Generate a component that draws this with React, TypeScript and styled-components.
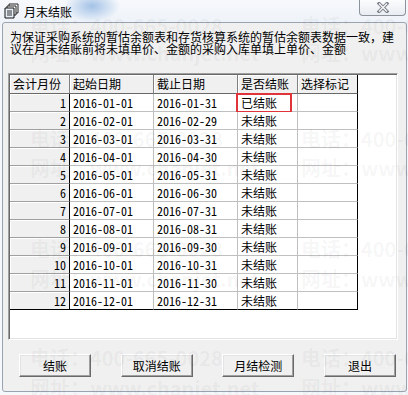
import styled, { createGlobalStyle } from "styled-components";

const rows = Array.from({ length: 12 }, (_, i) => {
  const m = i + 1;
  const mm = String(m).padStart(2, "0");
  const last = new Date(2016, m, 0).getDate();
  return {
    month: m,
    start: `2016-${mm}-01`,
    end: `2016-${mm}-${last}`,
    status: m === 1 ? "已结账" : "未结账",
  };
});

const marks = [
  { x: 30, y: 15, t: "电话：400-665-0028" },
  { x: 301, y: 15, t: "电话：400-665-0028" },
  { x: 30, y: 42, t: "网址：www.chanjet.net" },
  { x: 301, y: 42, t: "网址：www.chanjet.net" },
  { x: 30, y: 128, t: "电话：400-665-0028" },
  { x: 301, y: 128, t: "电话：400-665-0028" },
  { x: 30, y: 157, t: "网址：www.chanjet.net" },
  { x: 301, y: 157, t: "网址：www.chanjet.net" },
  { x: 30, y: 238, t: "电话：400-665-0028" },
  { x: 301, y: 238, t: "电话：400-665-0028" },
  { x: 30, y: 268, t: "网址：www.chanjet.net" },
  { x: 301, y: 268, t: "网址：www.chanjet.net" },
  { x: 30, y: 347, t: "电话：400-665-0028" },
  { x: 301, y: 347, t: "电话：400-665-0028" },
  { x: 30, y: 377, t: "网址：www.chanjet.net" },
  { x: 301, y: 377, t: "网址：www.chanjet.net" },
];

const App = () => {
  return (
    <>
      <GlobalStyle />
      <Window>
        <TitleBar>
          <svg width="17" height="16" viewBox="0 0 17 16">
            <path d="M6 1h9v9H6z" fill="#fff" stroke="#222" />
            <path d="M4 3h9v9H4z" fill="#fff" stroke="#222" />
            <path d="M2 5h9v10H2z" fill="#e8eef6" stroke="#111" />
            <path d="M4 8h5M4 10h5M4 12h5" stroke="#333" />
          </svg>
          <Title>月末结账</Title>
          <CloseBtn>
            <svg width="14" height="11" viewBox="0 0 14 11">
              <path
                d="M3 1.5l8 8M11 1.5l-8 8"
                stroke="#7a808a"
                strokeWidth="3.2"
                strokeLinecap="square"
                fill="none"
              />
              <path
                d="M3 1.5l8 8M11 1.5l-8 8"
                stroke="#f6f7f9"
                strokeWidth="1.4"
                fill="none"
              />
            </svg>
          </CloseBtn>
        </TitleBar>
        <Client>
          <Message>
            <Line>为保证采购系统的暂估余额表和存货核算系统的暂估余额表数据一致，建</Line>
            <Line>议在月末结账前将未填单价、金额的采购入库单填上单价、金额</Line>
          </Message>
          <GridBox>
            <Grid>
              <Cell $kind="head">会计月份</Cell>
              <Cell $kind="head">起始日期</Cell>
              <Cell $kind="head">截止日期</Cell>
              <Cell $kind="head">是否结账</Cell>
              <Cell $kind="head" $lastCol>
                选择标记
              </Cell>
              {rows.map((r, i) => {
                const lastRow = i === rows.length - 1;
                return [
                  <Cell key={`m${i}`} $kind="rowhead" $lastRow={lastRow}>
                    {r.month}
                  </Cell>,
                  <Cell key={`s${i}`} $kind="data" $lastRow={lastRow}>
                    {r.start}
                  </Cell>,
                  <Cell key={`e${i}`} $kind="data" $lastRow={lastRow}>
                    {r.end}
                  </Cell>,
                  <Cell key={`t${i}`} $kind="data" $lastRow={lastRow}>
                    {r.status}
                    {i === 0 && <Highlight />}
                  </Cell>,
                  <Cell key={`x${i}`} $kind="data" $lastRow={lastRow} $lastCol />,
                ];
              })}
            </Grid>
          </GridBox>
          <BtnRow>
            <Btn>结账</Btn>
            <Btn>取消结账</Btn>
            <Btn>月结检测</Btn>
            <Btn>退出</Btn>
          </BtnRow>
        </Client>
        {marks.map((m, i) => (
          <Watermark key={i} $x={m.x} $y={m.y}>
            {m.t}
          </Watermark>
        ))}
      </Window>
    </>
  );
};

export default App;

const GlobalStyle = createGlobalStyle`
  body {
    margin: 0;
    background: #f5f8fb;
    font-family: "Noto Sans Mono CJK SC", "Noto Sans CJK SC", monospace;
    font-size: 12px;
    color: #000;
  }
`;

const Window = styled.div`
  position: relative;
  width: 408px;
  height: 395px;
  overflow: hidden;
  background:
    radial-gradient(ellipse 28px 16px at 92px 6px, rgba(96, 150, 214, 0.55), transparent),
    linear-gradient(#f7f9fc, #eef3f9 22px, #f5f8fb 30px);
`;

const TitleBar = styled.div`
  display: flex;
  align-items: center;
  height: 22px;
  padding-left: 3px;
`;

const Title = styled.div`
  margin-left: 4px;
  margin-top: 2px;
  font-family: "Noto Sans CJK SC", sans-serif;
  font-size: 12px;
  line-height: 12px;
`;

const CloseBtn = styled.div`
  display: flex;
  align-items: center;
  justify-content: center;
  align-self: flex-start;

  width: 45px;
  height: 15px;
  margin-left: auto;
  margin-right: 2px;

  border: 1px solid #8d939c;
  border-top: none;
  border-radius: 0 0 4px 4px;
  background: linear-gradient(#fbfcfd, #e9edf2);
`;

const Client = styled.div`
  display: flex;
  flex-direction: column;

  height: 370px;
  margin: 0 1px 0 2px;

  background: #f0f0f0;
  border: 1px solid #9aa4b0;
  border-radius: 3px;
  box-sizing: border-box;
`;

const Message = styled.div`
  padding: 8px 0 0 7px;
`;

const Line = styled.div`
  height: 12px;
  line-height: 12px;
  white-space: nowrap;
  font-family: "Noto Sans CJK SC", sans-serif;
`;

const GridBox = styled.div`
  width: 390px;
  height: 267px;
  margin: 18px 0 0 5px;

  background: #fff;
  border-top: 1px solid #a0a0a0;
  border-left: 1px solid #a0a0a0;
  border-right: 1px solid #fff;
  border-bottom: 1px solid #fff;
  box-shadow: inset 1px 1px 0 #696969, inset -1px -1px 0 #e3e3e3;
  box-sizing: border-box;
  padding: 1px;
`;

const Grid = styled.div`
  display: grid;
  grid-template-columns: 60px 84px 84px 60px 60px;
  grid-template-rows: 19px repeat(12, 18px);
  width: 348px;
`;

const Cell = styled.div<{
  $kind: "head" | "rowhead" | "data";
  $lastCol?: boolean;
  $lastRow?: boolean;
}>`
  position: relative;
  box-sizing: border-box;
  padding: 0 3px;
  line-height: 18px;
  white-space: nowrap;

  background: ${(p) => (p.$kind === "data" ? "#fff" : "#f0f0f0")};
  text-align: ${(p) => (p.$kind === "rowhead" ? "right" : "left")};

  border-right: 1px solid
    ${(p) =>
      p.$lastCol || p.$kind === "rowhead"
        ? "#000"
        : p.$kind === "head"
        ? "#808080"
        : "#c0c0c0"};
  border-bottom: 1px solid
    ${(p) =>
      p.$lastRow
        ? "#000"
        : p.$kind === "head"
        ? "#696969"
        : p.$kind === "rowhead"
        ? "#a0a0a0"
        : "#c0c0c0"};
  box-shadow: ${(p) =>
    p.$kind === "data" ? "none" : "inset 1px 1px 0 #fff"};
`;

const Highlight = styled.div`
  position: absolute;
  left: -2px;
  top: -1px;
  width: 56px;
  height: 20px;
  box-sizing: border-box;
  border: 2px solid #e0343a;
`;

const BtnRow = styled.div`
  display: flex;
  justify-content: space-between;
  margin: 14px 10px 0 16px;
`;

const Btn = styled.div`
  display: flex;
  align-items: center;
  justify-content: center;

  width: 72px;
  height: 23px;
  box-sizing: border-box;

  background: #f0f0f0;
  border-top: 1px solid #fff;
  border-left: 1px solid #fff;
  border-right: 1px solid #696969;
  border-bottom: 1px solid #696969;
  box-shadow: inset -1px -1px 0 #a0a0a0, inset 1px 1px 0 #e3e3e3;

  font-family: "Noto Sans CJK SC", sans-serif;
  font-size: 12px;
`;

const Watermark = styled.div<{ $x: number; $y: number }>`
  position: absolute;
  left: ${(p) => p.$x}px;
  top: ${(p) => p.$y}px;
  pointer-events: none;
  white-space: nowrap;

  font-family: "Noto Sans CJK SC", sans-serif;
  font-size: 20px;
  font-weight: 700;
  line-height: 22px;
  color: rgba(0, 0, 0, 0.05);
`;
